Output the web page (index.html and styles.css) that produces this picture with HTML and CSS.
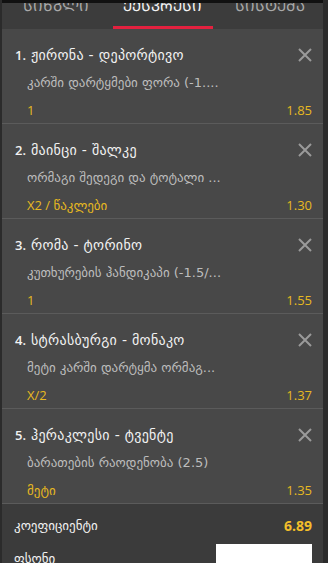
FILE: index.html
```html
<!DOCTYPE html>
<html lang="ka">
<head>
<meta charset="utf-8">
<link rel="stylesheet" href="styles.css">
</head>
<body>
<div class="panel">
  <div class="topline"></div>
  <nav class="tabs">
    <div class="tab"><span class="tab-label">ᲡᲘᲜᲒᲚᲘ</span></div>
    <div class="tab active"><span class="tab-label">ᲔᲥᲡᲞᲠᲔᲡᲘ</span></div>
    <div class="tab"><span class="tab-label">ᲡᲘᲡᲢᲔᲛᲐ</span></div>
  </nav>
  <ul class="bets">
    <li class="bet">
      <div class="bet-head"><span class="num">1.</span><span class="match">ჟირონა - დეპორტივო</span>
        <svg class="close" viewBox="0 0 14 14"><path d="M1 1L13 13M13 1L1 13"/></svg></div>
      <div class="market">კარში დარტყმები ფორა (-1....</div>
      <div class="pick"><span>1</span><span>1.85</span></div>
    </li>
    <li class="bet">
      <div class="bet-head"><span class="num">2.</span><span class="match">მაინცი - შალკე</span>
        <svg class="close" viewBox="0 0 14 14"><path d="M1 1L13 13M13 1L1 13"/></svg></div>
      <div class="market">ორმაგი შედეგი და ტოტალი ...</div>
      <div class="pick"><span>X2 / წაკლები</span><span>1.30</span></div>
    </li>
    <li class="bet">
      <div class="bet-head"><span class="num">3.</span><span class="match">რომა - ტორინო</span>
        <svg class="close" viewBox="0 0 14 14"><path d="M1 1L13 13M13 1L1 13"/></svg></div>
      <div class="market">კუთხურების ჰანდიკაპი (-1.5/...</div>
      <div class="pick"><span>1</span><span>1.55</span></div>
    </li>
    <li class="bet">
      <div class="bet-head"><span class="num">4.</span><span class="match">სტრასბურგი - მონაკო</span>
        <svg class="close" viewBox="0 0 14 14"><path d="M1 1L13 13M13 1L1 13"/></svg></div>
      <div class="market">მეტი კარში დარტყმა ორმაგ...</div>
      <div class="pick"><span>X/2</span><span>1.37</span></div>
    </li>
    <li class="bet">
      <div class="bet-head"><span class="num">5.</span><span class="match">ჰერაკლესი - ტვენტე</span>
        <svg class="close" viewBox="0 0 14 14"><path d="M1 1L13 13M13 1L1 13"/></svg></div>
      <div class="market">ბარათების რაოდენობა (2.5)</div>
      <div class="pick"><span>მეტი</span><span>1.35</span></div>
    </li>
  </ul>
  <div class="summary">
    <div class="sum-row"><span class="sum-label">კოეფიციენტი</span><span class="total">6.89</span></div>
    <div class="stake-row"><span class="sum-label">ფსონი</span><input class="stake" type="text"></div>
  </div>
</div>
</body>
</html>
```

FILE: styles.css
```css
html, body {
  margin: 0;
  padding: 0;
  height: 563px;
  overflow: hidden;
  background: #2b2b2b;
}
body {
  font-family: "DejaVu Sans", "Open Sans", sans-serif;
  font-size: 13px;
}
.panel {
  margin-left: 2px;
  width: 321px;
  background: #484848;
  position: relative;
}
.topline {
  height: 3px;
  background: #111;
  position: relative;
  z-index: 2;
}
.tabs {
  display: grid;
  grid-template-columns: 1fr 1fr 1fr;
  height: 26px;
  background: #3c3c3c;
  overflow: hidden;
}
.tab {
  position: relative;
  text-align: center;
  color: #a9a9a9;
}
.tab-label {
  display: block;
  font-size: 15px;
  line-height: 18px;
  margin-top: -6px;
}
.tab.active { color: #f4f4f4; }
.tab.active::after {
  content: "";
  position: absolute;
  left: 50%;
  bottom: 0;
  width: 100px;
  height: 3px;
  margin-left: -50px;
  background: #e3213f;
}
.bets {
  list-style: none;
  margin: 0;
  padding: 0;
}
.bet {
  border-bottom: 1px solid #5b5b5b;
  padding: 16px 11px 0 13px;
  height: 78px;
}
.bet-head {
  display: flex;
  align-items: center;
  height: 20px;
  color: #f2f2f2;
}
.num {
  width: 16px;
  font-family: "Open Sans", "DejaVu Sans", sans-serif;
  font-size: 13px;
  font-weight: 600;
}
.match {
  flex: 1;
  font-size: 14px;
  letter-spacing: 0.3px;
}
.close {
  width: 14px;
  height: 14px;
  stroke: #9a9a9a;
  stroke-width: 2;
  fill: none;
}
.market {
  margin-top: 8px;
  padding-left: 12px;
  line-height: 20px;
  color: #bdbdbd;
  white-space: nowrap;
}
.pick {
  margin-top: 7px;
  padding-left: 12px;
  display: flex;
  justify-content: space-between;
  line-height: 20px;
  color: #e6b821;
  font-family: "Open Sans", "DejaVu Sans", sans-serif;
}
.summary {
  background: #3b3b3b;
  padding: 12px 11px 0 12px;
  height: 80px;
}
.sum-row {
  display: flex;
  justify-content: space-between;
  line-height: 20px;
  color: #f2f2f2;
}
.total {
  color: #f2be2a;
  font-weight: bold;
  font-family: "Open Sans", "DejaVu Sans", sans-serif;
  font-size: 14px;
}
.stake-row {
  margin-top: 8px;
  display: flex;
  justify-content: space-between;
  align-items: center;
  color: #f2f2f2;
}
.stake {
  width: 96px;
  height: 28px;
  box-sizing: border-box;
  border: 0;
  background: #fff;
  padding: 0;
}
```
